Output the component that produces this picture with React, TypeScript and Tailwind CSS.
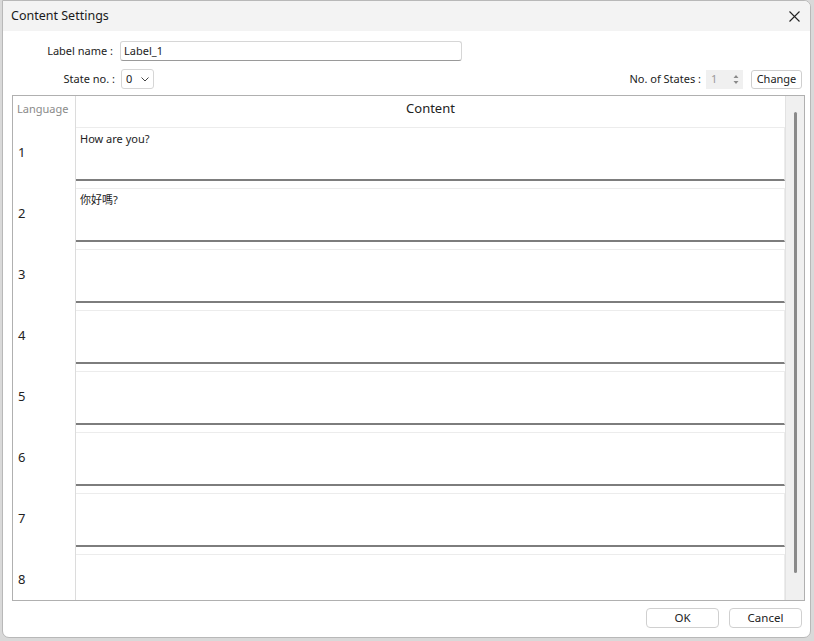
import React from 'react';

const rows = [
    { n: '1', text: 'How are you?' },
    { n: '2', text: '你好嗎?' },
    { n: '3', text: '' },
    { n: '4', text: '' },
    { n: '5', text: '' },
    { n: '6', text: '' },
    { n: '7', text: '' },
    { n: '8', text: '' },
];

function LangRow({ n, text }: { n: string; text: string }) {
    return (
        <div className="flex h-[61px] shrink-0">
            <div className="w-[63px] shrink-0 border-r border-[#dcdcdc] flex items-center pl-[5px] pt-[1px] text-[13px] text-[#222]">
                {n}
            </div>
            <div className="flex-1 pt-[5px]">
                <div className="h-[54px] border-t border-r border-[#ececec] border-b-2 border-b-[#7d7d7d] px-[4px] pt-[3px] text-[11px] text-[#222]">
                    {text}
                </div>
            </div>
        </div>
    );
}

export default function App() {
    return (
        <div
            className="w-[814px] h-[641px] bg-[#d9d9d9] overflow-hidden"
            style={{ fontFamily: '"Noto Sans", "Noto Sans CJK SC", sans-serif' }}
        >
            <div className="ml-[2px] w-[809px] h-[638px] bg-white border border-[#b8b8b8] rounded-b-[7px] rounded-tr-[7px] flex flex-col overflow-hidden">
                {/* title bar */}
                <div className="h-[30px] bg-[#f3f3f3] flex items-center justify-between pl-[8px] pr-[8px] shrink-0">
                    <span className="text-[12.5px] text-[#1a1a1a]">Content Settings</span>
                    <svg width="11" height="11" viewBox="0 0 11 11" className="mr-[2px]">
                        <path d="M0.5 0.5 L10.5 10.5 M10.5 0.5 L0.5 10.5" stroke="#222" strokeWidth="1.1" fill="none" />
                    </svg>
                </div>

                {/* label name */}
                <div className="flex items-center h-[20px] mt-[10px] shrink-0">
                    <span className="w-[117px] text-right text-[11px] text-[#222] pr-[7px]">Label name :</span>
                    <div className="w-[342px] h-[20px] border border-[#d6d6d6] border-b-[#9a9a9a] rounded-[3px] flex items-center px-[3px] text-[11px] text-[#222]">
                        Label_1
                    </div>
                </div>

                {/* state row */}
                <div className="flex items-center h-[20px] mt-[8px] shrink-0">
                    <span className="w-[118px] text-right text-[11px] text-[#222] pr-[6px]">State no. :</span>
                    <div className="w-[33px] h-[20px] border border-[#d6d6d6] rounded-[3px] flex items-center justify-between px-[4px] text-[11px] text-[#222]">
                        <span>0</span>
                        <svg width="8" height="5" viewBox="0 0 8 5">
                            <path d="M0.5 0.5 L4 4 L7.5 0.5" stroke="#444" strokeWidth="1" fill="none" />
                        </svg>
                    </div>
                    <div className="flex-1" />
                    <span className="text-[11px] text-[#222] mr-[5px]">No. of States :</span>
                    <div className="w-[37px] h-[19px] bg-[#f0f0f0] flex items-center justify-between pl-[5px] pr-[4px] text-[11px] text-[#9a9a9a]">
                        <span>1</span>
                        <svg width="6" height="11" viewBox="0 0 6 11">
                            <path d="M0.5 4 L3 1 L5.5 4 Z M0.5 7 L3 10 L5.5 7 Z" fill="#8a8a8a" />
                        </svg>
                    </div>
                    <div className="ml-[8px] mr-[8px] w-[51px] h-[19px] border border-[#cfcfcf] rounded-[3px] flex items-center justify-center text-[11px] text-[#222]">
                        Change
                    </div>
                </div>

                {/* table */}
                <div className="ml-[9px] mt-[6px] w-[793px] h-[506px] border border-[#b0b0b0] flex shrink-0">
                    <div className="flex-1 flex flex-col overflow-hidden">
                        <div className="flex h-[26px] shrink-0">
                            <div className="w-[63px] shrink-0 border-r border-[#dcdcdc] flex items-center pl-[4px] text-[11px] text-[#8a8a8a]">
                                Language
                            </div>
                            <div className="flex-1 flex items-center justify-center text-[13px] text-[#222]">
                                Content
                            </div>
                        </div>
                        {rows.map((r) => (
                            <LangRow key={r.n} n={r.n} text={r.text} />
                        ))}
                    </div>
                    <div className="w-[19px] shrink-0 bg-[#f0f0f0] border-l border-[#e2e2e2] flex justify-center pt-[16px] pb-[27px]">
                        <div className="w-[3px] h-full bg-[#8a8a8a] rounded-full" />
                    </div>
                </div>

                {/* buttons */}
                <div className="flex justify-end gap-[10px] mt-[7px] mr-[8px]">
                    <div className="w-[73px] h-[20px] border border-[#d0d0d0] rounded-[4px] flex items-center justify-center text-[11.5px] text-[#222]">
                        OK
                    </div>
                    <div className="w-[73px] h-[20px] border border-[#d0d0d0] rounded-[4px] flex items-center justify-center text-[11.5px] text-[#222]">
                        Cancel
                    </div>
                </div>
            </div>
        </div>
    );
}
